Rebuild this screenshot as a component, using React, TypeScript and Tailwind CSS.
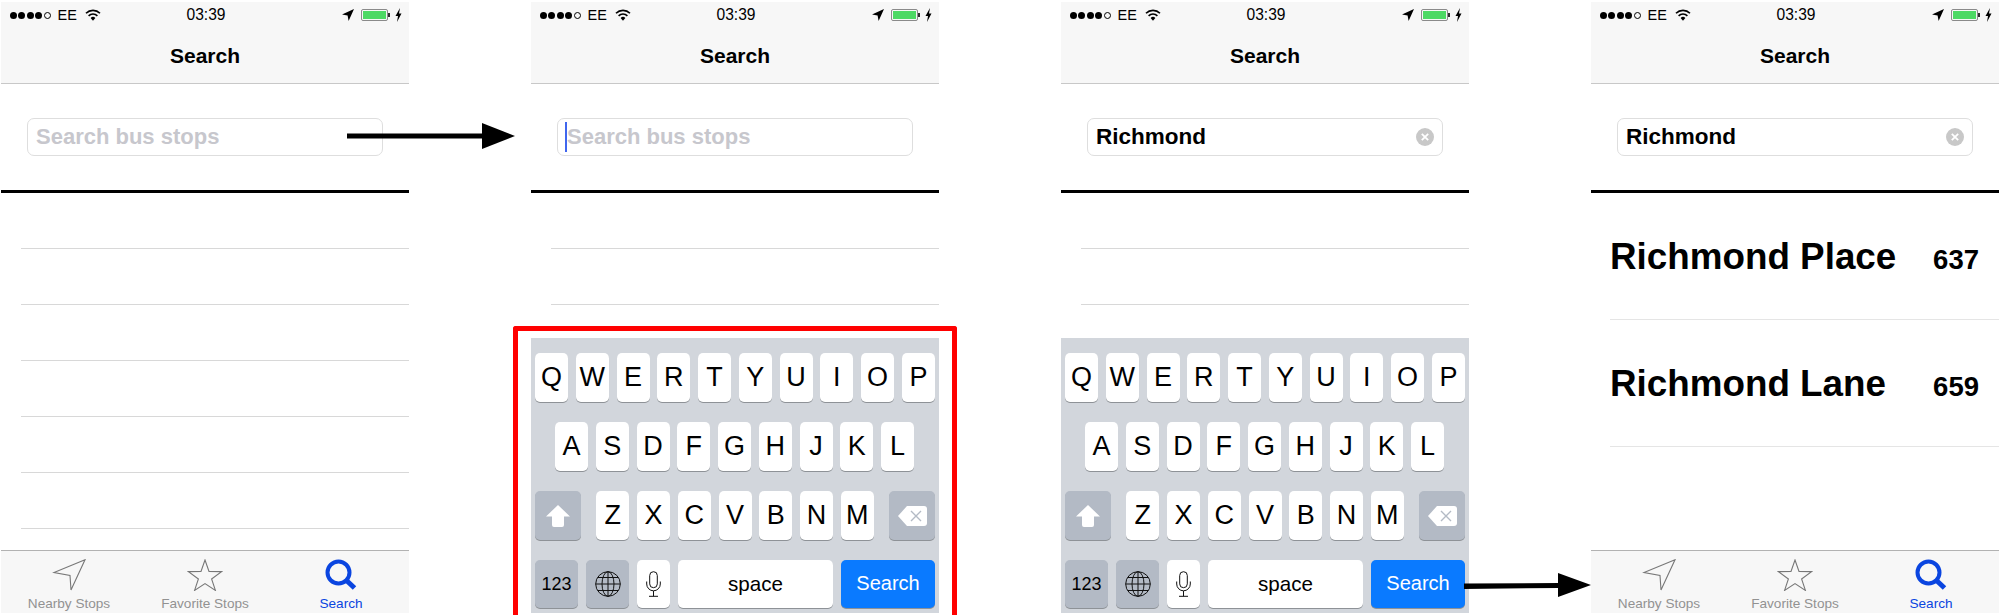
import React from 'react';

const ROW_ONE = ['Q', 'W', 'E', 'R', 'T', 'Y', 'U', 'I', 'O', 'P'];
const ROW_TWO = ['A', 'S', 'D', 'F', 'G', 'H', 'J', 'K', 'L'];
const ROW_THREE = ['Z', 'X', 'C', 'V', 'B', 'N', 'M'];

const StatusBar: React.FC = () => (
    <div className='grid grid-cols-3 h-[26px] items-center pl-[9px] pr-[7px]'>
        <div className='flex items-center'>
            <div className='flex gap-[1.4px]'>
                {[0, 1, 2, 3].map((i) => (
                    <span key={i} className='w-[7px] h-[7px] rounded-full bg-black' />
                ))}
                <span className='w-[7px] h-[7px] rounded-full border border-black' />
            </div>
            <span className='ml-[7px] text-[14.5px] leading-none text-black'>EE</span>
            <svg className='ml-[8px]' width='16' height='12' viewBox='0 0 16 12'>
                <path d='M1 4.2 A10 10 0 0 1 15 4.2' fill='none' stroke='#000' strokeWidth='1.6' />
                <path d='M3.6 6.8 A6.4 6.4 0 0 1 12.4 6.8' fill='none' stroke='#000' strokeWidth='1.6' />
                <path d='M5.6 9 L8 11.8 L10.4 9 A3.4 3.4 0 0 0 5.6 9 Z' fill='#000' />
            </svg>
        </div>
        <div className='text-center text-[15.6px] leading-none text-black'>03:39</div>
        <div className='flex items-center justify-end'>
            <svg width='12' height='12' viewBox='0 0 12 12'>
                <path d='M12 0 L0 5.4 L5.6 6.4 L6.6 12 Z' fill='#000' />
            </svg>
            <div className='ml-[7px] w-[27px] h-[12px] border border-[#8a8a8a] rounded-[2px] p-[1px]'>
                <div className='w-full h-full bg-[#4cd964]' />
            </div>
            <div className='w-[2px] h-[4px] bg-[#333]' />
            <svg className='ml-[5px]' width='7' height='14' viewBox='0 0 7 14'>
                <path d='M5 0 L0.5 8 L3 8 L2 14 L6.5 5.6 L4 5.6 Z' fill='#000' />
            </svg>
        </div>
    </div>
);

const NavBar: React.FC = () => (
    <div className='h-[82px] bg-[#f7f7f7] border-b border-[#c8c8c8] shrink-0'>
        <StatusBar />
        <div className='h-[55px] flex items-center justify-center text-[21px] font-bold text-black'>
            Search
        </div>
    </div>
);

const SearchField: React.FC<{ value?: string; cursor?: boolean }> = ({ value, cursor }) => (
    <div className='h-[106px] shrink-0 flex items-center px-[26px] border-b-[3px] border-black box-content'>
        <div className='relative w-[357px] h-[38px] border border-[#dedede] rounded-[7px] flex items-center justify-between pl-[8px] pr-[8px] text-[22px] font-bold'>
            {cursor && <span className='absolute left-[7px] top-[3px] w-[2px] h-[30px] bg-[#4066ee]' />}
            {value ? (
                <span className='text-[22.5px] text-black'>{value}</span>
            ) : (
                <span className={`text-[#c7c7cd] mt-[-2px] ${cursor ? 'ml-[1px]' : ''}`}>Search bus stops</span>
            )}
            {value && (
                <svg width='18' height='18' viewBox='0 0 18 18'>
                    <circle cx='9' cy='9' r='9' fill='#c8c8c8' />
                    <path d='M5.8 5.8 L12.2 12.2 M12.2 5.8 L5.8 12.2' stroke='#fff' strokeWidth='1.8' />
                </svg>
            )}
        </div>
    </div>
);

const EmptyRows: React.FC<{ count: number }> = ({ count }) => (
    <div className='pl-[20px]'>
        {Array.from({ length: count }).map((_, i) => (
            <div key={i} className='h-[56px] border-b border-[#d8d8d8]' />
        ))}
    </div>
);

const ResultRow: React.FC<{ name: string; code: string }> = ({ name, code }) => (
    <div className='h-[126px] ml-[19px] pr-[20px] border-b border-[#e5e5e5] flex items-center justify-between font-bold text-black box-content'>
        <span className='text-[36.8px] leading-none mt-[2px]'>{name}</span>
        <span className='text-[27.5px] leading-none mt-[7px]'>{code}</span>
    </div>
);

const TabBar: React.FC = () => (
    <div className='mt-auto h-[63px] shrink-0 bg-[#f7f7f7] border-t border-[#b2b2b2] grid grid-cols-3 pt-[8px] text-center text-[13.6px] leading-[16px] text-[#929292]'>
        <div className='flex flex-col items-center'>
            <svg width='34' height='32' viewBox='0 0 34 32'>
                <path d='M33 0.8 L2 13.5 L18 16.5 L19 31 Z' fill='none' stroke='#777' strokeWidth='1.1' />
            </svg>
            <span className='mt-[5px]'>Nearby Stops</span>
        </div>
        <div className='flex flex-col items-center'>
            <svg width='36' height='32' viewBox='0 0 36 32'>
                <path d='M18 1 L22 12.4 L34.5 12.6 L24.6 20 L28.4 31.4 L18 24.6 L7.6 31.4 L11.4 20 L1.5 12.6 L14 12.4 Z' fill='none' stroke='#777' strokeWidth='1.1' />
            </svg>
            <span className='mt-[5px]'>Favorite Stops</span>
        </div>
        <div className='flex flex-col items-center text-[#0a45e0]'>
            <svg width='32' height='32' viewBox='0 0 32 32'>
                <circle cx='13.5' cy='13.5' r='11' fill='none' stroke='#0a45e0' strokeWidth='4' />
                <path d='M21.5 21.5 L29.5 29' stroke='#0a45e0' strokeWidth='5' />
            </svg>
            <span className='mt-[5px]'>Search</span>
        </div>
    </div>
);

const LetterKey: React.FC<{ letter: string }> = ({ letter }) => (
    <div className='w-[33px] h-[49px] rounded-[5px] bg-white shadow-[0_1px_0_#8e9297] flex items-center justify-center text-[27px] text-black'>
        {letter}
    </div>
);

const Keyboard: React.FC = () => (
    <div className='mt-auto h-[275px] shrink-0 bg-[#d2d6dc] px-[4px] pt-[15px] flex flex-col gap-[20px]'>
        <div className='flex gap-[7.78px]'>
            {ROW_ONE.map((k) => <LetterKey key={k} letter={k} />)}
        </div>
        <div className='flex gap-[7.78px] px-[20px]'>
            {ROW_TWO.map((k) => <LetterKey key={k} letter={k} />)}
        </div>
        <div className='flex justify-between'>
            <div className='w-[46px] h-[49px] rounded-[5px] bg-[#b3bac5] shadow-[0_1px_0_#8e9297] flex items-center justify-center'>
                <svg width='24' height='22' viewBox='0 0 24 22'>
                    <path d='M12 0 L24 11.5 L18 11.5 L18 20 Q18 22 16 22 L8 22 Q6 22 6 20 L6 11.5 L0 11.5 Z' fill='#fff' />
                </svg>
            </div>
            <div className='flex gap-[7.78px]'>
                {ROW_THREE.map((k) => <LetterKey key={k} letter={k} />)}
            </div>
            <div className='w-[46px] h-[49px] rounded-[5px] bg-[#b3bac5] shadow-[0_1px_0_#8e9297] flex items-center justify-center'>
                <svg width='29' height='20' viewBox='0 0 29 20'>
                    <path d='M9 0 L26 0 Q29 0 29 3 L29 17 Q29 20 26 20 L9 20 L0 10 Z' fill='#fff' />
                    <path d='M13 5 L23 15 M23 5 L13 15' stroke='#b3bac5' strokeWidth='1.4' />
                </svg>
            </div>
        </div>
        <div className='flex gap-[8px]'>
            <div className='w-[43px] h-[48px] rounded-[5px] bg-[#b3bac5] shadow-[0_1px_0_#8e9297] flex items-center justify-center text-[18px] text-black'>
                123
            </div>
            <div className='w-[43px] h-[48px] rounded-[5px] bg-[#b3bac5] shadow-[0_1px_0_#8e9297] flex items-center justify-center'>
                <svg width='26' height='26' viewBox='0 0 26 26' fill='none' stroke='#111' strokeWidth='1'>
                    <circle cx='13' cy='13' r='12.3' />
                    <ellipse cx='13' cy='13' rx='6' ry='12.3' />
                    <path d='M13 0.7 L13 25.3 M0.7 13 L25.3 13 M2.6 6.5 L23.4 6.5 M2.6 19.5 L23.4 19.5' />
                </svg>
            </div>
            <div className='w-[33px] h-[48px] rounded-[5px] bg-white shadow-[0_1px_0_#8e9297] flex items-center justify-center'>
                <svg width='15' height='26' viewBox='0 0 15 26' fill='none' stroke='#111' strokeWidth='1'>
                    <rect x='3.7' y='0.7' width='7.6' height='16' rx='3.8' />
                    <path d='M0.7 10.5 L0.7 13 A6.8 6.8 0 0 0 14.3 13 L14.3 10.5 M7.5 20 L7.5 25.3 M3 25.3 L12 25.3' />
                </svg>
            </div>
            <div className='w-[155px] h-[48px] rounded-[5px] bg-white shadow-[0_1px_0_#8e9297] flex items-center justify-center text-[20.6px] text-black'>
                space
            </div>
            <div className='w-[94px] h-[48px] rounded-[5px] bg-[#0a7aff] shadow-[0_1px_0_#8e9297] flex items-center justify-center text-[20px] text-white'>
                <span className='mt-[-2px]'>Search</span>
            </div>
        </div>
    </div>
);

const Phone: React.FC<{ children: React.ReactNode }> = ({ children }) => (
    <div className='w-[408px] h-[611px] shrink-0 flex flex-col overflow-hidden bg-white'>
        <NavBar />
        {children}
    </div>
);

export default function App() {
    return (
        <div className="relative w-[2000px] h-[615px] bg-white overflow-hidden font-['Liberation_Sans',Arial,sans-serif]">
            <div className='flex gap-[122px] pl-[1px] pt-[2px]'>
                <Phone>
                    <SearchField />
                    <EmptyRows count={6} />
                    <TabBar />
                </Phone>
                <Phone>
                    <SearchField cursor />
                    <EmptyRows count={2} />
                    <Keyboard />
                </Phone>
                <Phone>
                    <SearchField value='Richmond' />
                    <EmptyRows count={2} />
                    <Keyboard />
                </Phone>
                <Phone>
                    <SearchField value='Richmond' />
                    <ResultRow name='Richmond Place' code='637' />
                    <ResultRow name='Richmond Lane' code='659' />
                    <TabBar />
                </Phone>
            </div>

            {/* annotations drawn over the screens */}
            <div className='absolute left-[513px] top-[326px] w-[444px] h-[289px] border-[5px] border-b-0 border-[#ff0000] rounded-t-[3px]' />
            <svg className='absolute left-[347px] top-[121px]' width='170' height='30' viewBox='0 0 170 30'>
                <rect x='0' y='12.5' width='136' height='5' fill='#000' />
                <path d='M135 2 L168 15 L135 28 Z' fill='#000' />
            </svg>
            <svg className='absolute left-[1464px] top-[571px]' width='128' height='28' viewBox='0 0 128 28'>
                <path d='M0 12.5 L95 12 L95 17 L0 18 Z' fill='#000' />
                <path d='M94 2 L127 14 L94 26 Z' fill='#000' />
            </svg>
        </div>
    );
}
